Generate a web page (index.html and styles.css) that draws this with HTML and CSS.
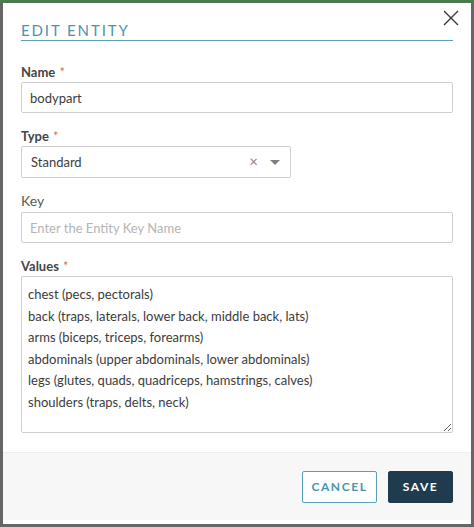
FILE: index.html
```html
<!DOCTYPE html>
<html>
<head>
<meta charset="utf-8">
<link rel="stylesheet" href="styles.css">
</head>
<body>
<div class="modal">
  <button class="close" aria-label="Close">
    <svg width="16" height="16" viewBox="0 0 16 16"><path d="M1 1 L15 15 M15 1 L1 15" stroke="#3a3a3a" stroke-width="1.4" fill="none"/></svg>
  </button>
  <div class="header"><h1 class="title">EDIT ENTITY</h1></div>
  <div class="body">
    <div class="field">
      <label class="label req">Name <span class="star">*</span></label>
      <div class="input">bodypart</div>
    </div>
    <div class="field">
      <label class="label req">Type <span class="star">*</span></label>
      <div class="select">
        <span class="select-val">Standard</span>
        <span class="clear">×</span>
        <span class="caret"></span>
      </div>
    </div>
    <div class="field">
      <label class="label plain">Key</label>
      <div class="input placeholder">Enter the Entity Key Name</div>
    </div>
    <div class="field">
      <label class="label req">Values <span class="star">*</span></label>
      <textarea class="textarea">chest (pecs, pectorals)
back (traps, laterals, lower back, middle back, lats)
arms (biceps, triceps, forearms)
abdominals (upper abdominals, lower abdominals)
legs (glutes, quads, quadriceps, hamstrings, calves)
shoulders (traps, delts, neck)</textarea>
    </div>
  </div>
  <div class="footer">
    <button class="btn btn-outline">CANCEL</button>
    <button class="btn btn-primary">SAVE</button>
  </div>
</div>
</body>
</html>
```
FILE: styles.css
```css
html, body {
  margin: 0;
  padding: 0;
}
body {
  width: 474px;
  height: 527px;
  background: linear-gradient(#4f7a4f 0, #4f7a4f 3px, #666666 3px);
  font-family: Lato, "Open Sans", sans-serif;
  overflow: hidden;
}
.modal {
  position: relative;
  margin: 3px 3px 0 3px;
  width: 468px;
  height: 521px;
  background: #fff;
  display: flex;
  flex-direction: column;
  box-sizing: border-box;
  padding-bottom: 4px;
}
.close {
  position: absolute;
  top: 7px;
  right: 12px;
  border: 0;
  background: transparent;
  padding: 0;
  width: 16px;
  height: 16px;
  cursor: pointer;
}
.close svg { display: block; }
.header {
  margin: 0 18px;
  padding-top: 18px;
  border-bottom: 1.5px solid #5a9fb8;
}
.title {
  margin: 0;
  font-size: 15px;
  line-height: 19px;
  font-weight: 400;
  letter-spacing: 1.9px;
  color: #4b93ae;
}
.body {
  padding: 0 18px;
  flex: 1;
}
.field { margin-top: 15px; }
.field:first-child { margin-top: 23px; }
.field.key { margin-top: 14px; }
.label {
  display: block;
  line-height: 16px;
  margin-bottom: 2px;
  color: #454545;
}
.label.req {
  font-size: 13px;
  font-weight: 700;
}
.label.plain {
  font-size: 14px;
  font-weight: 400;
  color: #5a5a5a;
  margin-bottom: 3px;
}
.star {
  color: #d4745a;
  font-weight: 400;
  margin-left: 1px;
}
.input {
  height: 31px;
  box-sizing: border-box;
  border: 1px solid #cfcfcf;
  border-radius: 2px;
  padding: 0 8px;
  display: flex;
  align-items: center;
  font-size: 13px;
  color: #3c3c3c;
}
.input.placeholder { color: #b5b5b5; }
.select {
  width: 270px;
  height: 32px;
  box-sizing: border-box;
  border: 1px solid #cfcfcf;
  border-radius: 2px;
  padding: 0 8px 0 9px;
  display: flex;
  align-items: center;
  font-size: 13px;
  color: #3c3c3c;
}
.select-val { flex: 1; }
.clear {
  color: #8a8a8a;
  font-size: 15px;
  margin-right: 12px;
  margin-top: -2px;
}
.caret {
  width: 0;
  height: 0;
  border-left: 5px solid transparent;
  border-right: 5px solid transparent;
  border-top: 5px solid #7f7f7f;
  margin-right: 2px;
}
.textarea {
  display: block;
  width: 100%;
  height: 157px;
  box-sizing: border-box;
  margin: 0;
  border: 1px solid #cfcfcf;
  border-radius: 2px;
  padding: 7px 6px;
  font-family: Lato, "Open Sans", sans-serif;
  font-size: 13px;
  line-height: 21.6px;
  color: #3c3c3c;
  resize: vertical;
  overflow: hidden;
}
.footer {
  margin-top: 19px;
  height: 68px;
  background: #f7f7f7;
  border-top: 1px solid #eeeeee;
  display: flex;
  justify-content: flex-end;
  align-items: center;
  gap: 11px;
  padding: 0 18px;
  box-sizing: border-box;
}
.btn {
  height: 32px;
  box-sizing: border-box;
  font-family: Lato, "Open Sans", sans-serif;
  font-size: 12px;
  font-weight: 700;
  letter-spacing: 1.6px;
  border-radius: 2px;
  cursor: pointer;
}
.btn-outline {
  width: 75px;
  background: #fff;
  border: 1px solid #5a9fb8;
  color: #4b93ae;
}
.btn-primary {
  width: 65px;
  background: #1f3c4f;
  border: 1px solid #1f3c4f;
  color: #fff;
}
```
